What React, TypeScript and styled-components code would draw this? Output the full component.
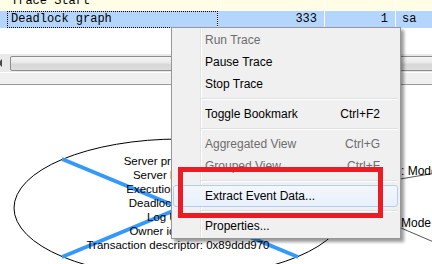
import React from "react";
import styled, { createGlobalStyle } from "styled-components";

const GlobalStyle = createGlobalStyle`
  html, body {
    margin: 0;
    padding: 0;
    overflow: hidden;
    background: #ffffff;
  }
`;

type MenuEntry =
  | { kind: "item"; label: string; shortcut?: string; disabled?: boolean; active?: boolean }
  | { kind: "sep" };

const menuEntries: MenuEntry[] = [
  { kind: "item", label: "Run Trace", disabled: true },
  { kind: "item", label: "Pause Trace" },
  { kind: "item", label: "Stop Trace" },
  { kind: "sep" },
  { kind: "item", label: "Toggle Bookmark", shortcut: "Ctrl+F2" },
  { kind: "sep" },
  { kind: "item", label: "Aggregated View", shortcut: "Ctrl+G", disabled: true },
  { kind: "item", label: "Grouped View", shortcut: "Ctrl+F", disabled: true },
  { kind: "sep" },
  { kind: "item", label: "Extract Event Data...", active: true },
  { kind: "sep" },
  { kind: "item", label: "Properties..." },
];

const nodeLines = [
  "Server process id: 59",
  "Server batch id: 0",
  "Execution context: 0",
  "Deadlock priority: 0",
  "Log Used: 0",
  "Owner id: 2105346",
  "Transaction descriptor: 0x89ddd970",
];

const App = () => {
  return (
    <>
      <GlobalStyle />
      <Screen>
        <RowList>
          <Row $tone="cream">
            <HeaderCell />
            <Cell>Trace Start</Cell>
            <Cell $align="right" />
            <Cell $align="right" />
            <Cell />
          </Row>
          <Row $tone="selected">
            <HeaderCell />
            <Cell $focused>Deadlock graph</Cell>
            <Cell $align="right">333</Cell>
            <Cell $align="right">1</Cell>
            <Cell>sa</Cell>
          </Row>
        </RowList>
        <Blank />
        <HScroll>
          <ArrowButton>
            <Arrow />
          </ArrowButton>
          <Thumb />
        </HScroll>
        <Band />
        <GraphPanel>
          <svg width="432" height="180" viewBox="0 0 432 180">
            <ellipse cx="180" cy="123" rx="166" ry="69" fill="none" stroke="#000" strokeWidth="1" />
            <line x1="340" y1="104" x2="436" y2="88" stroke="#555" strokeWidth="1" />
            <line x1="345" y1="119" x2="436" y2="158" stroke="#555" strokeWidth="1" />
            <line x1="62" y1="74" x2="298" y2="172" stroke="#3399ff" strokeWidth="4" />
            <line x1="62" y1="172" x2="298" y2="74" stroke="#3399ff" strokeWidth="4" />
          </svg>
          <NodeLabel>
            {nodeLines.map((l, i) => (
              <span key={i}>{l}</span>
            ))}
          </NodeLabel>
          <EdgeLabel $top={79}>: Mode: X</EdgeLabel>
          <EdgeLabel $top={131}>Mode : U</EdgeLabel>
        </GraphPanel>

        <Menu>
          {menuEntries.map((e, i) =>
            e.kind === "sep" ? (
              <Separator key={i} />
            ) : (
              <MenuItem key={i} $disabled={e.disabled} $active={e.active}>
                <span>{e.label}</span>
                <span>{e.shortcut}</span>
              </MenuItem>
            )
          )}
        </Menu>
        <Highlight />
      </Screen>
    </>
  );
};

export default App;

const Screen = styled.div`
  position: relative;
  width: 432px;
  height: 264px;
  overflow: hidden;
  display: flex;
  flex-direction: column;
  background: #ffffff;
`;

const RowList = styled.div`
  margin-top: -7px;
  display: flex;
  flex-direction: column;
`;

const Row = styled.div<{ $tone: "cream" | "selected" }>`
  display: grid;
  grid-template-columns: 7px 211px 107px 71px 1fr;
  height: 17px;
  border-bottom: 1px solid #ffffff;
  background: ${(p) => (p.$tone === "cream" ? "#fffde6" : "#b5d6fc")};
  font-family: "Liberation Mono", "Courier New", monospace;
  font-size: 12px;
  line-height: 17px;
  color: #000;
`;

const HeaderCell = styled.div``;

const Cell = styled.div<{ $align?: "right"; $focused?: boolean }>`
  box-sizing: border-box;
  padding: 0 ${(p) => (p.$align === "right" ? "7px" : "4px")} 0 4px;
  text-align: ${(p) => p.$align || "left"};
  border-right: 1px solid #ffffff;
  white-space: nowrap;
  overflow: hidden;
  ${(p) => p.$focused && "outline: 1px dotted #000; outline-offset: -1px;"}
  &:last-child {
    border-right: none;
    padding-left: 6px;
  }
`;

const Blank = styled.div`
  height: 25px;
  flex-shrink: 0;
`;

const HScroll = styled.div`
  height: 18px;
  flex-shrink: 0;
  display: flex;
  align-items: center;
  background: #e9e9e9;
`;

const ArrowButton = styled.div`
  width: 10px;
  height: 18px;
  display: flex;
  align-items: center;
  flex-shrink: 0;
`;

const Arrow = styled.div`
  margin-left: -2px;
  width: 0;
  height: 0;
  border-right: 4px solid #4a4a4a;
  border-top: 4px solid transparent;
  border-bottom: 4px solid transparent;
`;

const Thumb = styled.div`
  flex: 1;
  height: 15px;
  margin-right: -6px;
  box-sizing: border-box;
  border: 1px solid #8c8c8c;
  border-radius: 2px;
  background: linear-gradient(#f4f4f4, #e9e9e9 45%, #d7d7d7 55%, #dddddd);
`;

const Band = styled.div`
  height: 11px;
  flex-shrink: 0;
  border-top: 1px solid #ffffff;
  background: #f0f0f0;
`;

const GraphPanel = styled.div`
  position: relative;
  flex: 1;
  border-top: 1px solid #9a9a9a;
  background: #ffffff;
  font-family: "Liberation Sans", Arial, sans-serif;
  font-size: 12px;
  color: #000;
  svg {
    display: block;
  }
`;

const NodeLabel = styled.div`
  position: absolute;
  left: 78px;
  width: 200px;
  top: 69px;
  display: flex;
  flex-direction: column;
  align-items: center;
  font-size: 11.5px;
  line-height: 14px;
  white-space: nowrap;
`;

const EdgeLabel = styled.div<{ $top: number }>`
  position: absolute;
  left: 401px;
  top: ${(p) => p.$top}px;
  line-height: 14px;
  white-space: nowrap;
`;

const Menu = styled.div`
  position: absolute;
  left: 171px;
  top: 27px;
  width: 230px;
  box-sizing: border-box;
  padding: 1px 2px;
  border: 1px solid #979797;
  background:
    linear-gradient(
      to right,
      transparent 28px,
      #e2e3e3 28px,
      #e2e3e3 29px,
      #ffffff 29px,
      #ffffff 30px,
      transparent 30px
    ),
    #f0f0f0;
  box-shadow: 3px 3px 3px rgba(0, 0, 0, 0.4);
  font-family: "Liberation Sans", Arial, sans-serif;
  font-size: 12px;
  display: flex;
  flex-direction: column;
`;

const MenuItem = styled.div<{ $disabled?: boolean; $active?: boolean }>`
  height: 22px;
  box-sizing: border-box;
  display: flex;
  justify-content: space-between;
  align-items: center;
  padding: 0 17px 0 30px;
  color: ${(p) => (p.$disabled ? "#6d6d6d" : "#000")};
  border: 1px solid ${(p) => (p.$active ? "#b0cff2" : "transparent")};
  border-radius: 3px;
  background: ${(p) => (p.$active ? "linear-gradient(#f3f7fd, #e8f0fb)" : "transparent")};
  margin-left: ${(p) => (p.$active ? "-1px" : "0")};
  padding-left: ${(p) => (p.$active ? "31px" : "30px")};
  white-space: nowrap;
`;

const Separator = styled.div`
  height: 8px;
  margin-left: 27px;
  display: flex;
  flex-direction: column;
  justify-content: center;
  &::before {
    content: "";
    height: 1px;
    background: #e0e0e0;
  }
  &::after {
    content: "";
    height: 1px;
    background: #ffffff;
  }
`;

const Highlight = styled.div`
  position: absolute;
  left: 178px;
  top: 167px;
  width: 205px;
  height: 51px;
  box-sizing: border-box;
  border: 5px solid #ed1c24;
  pointer-events: none;
`;
